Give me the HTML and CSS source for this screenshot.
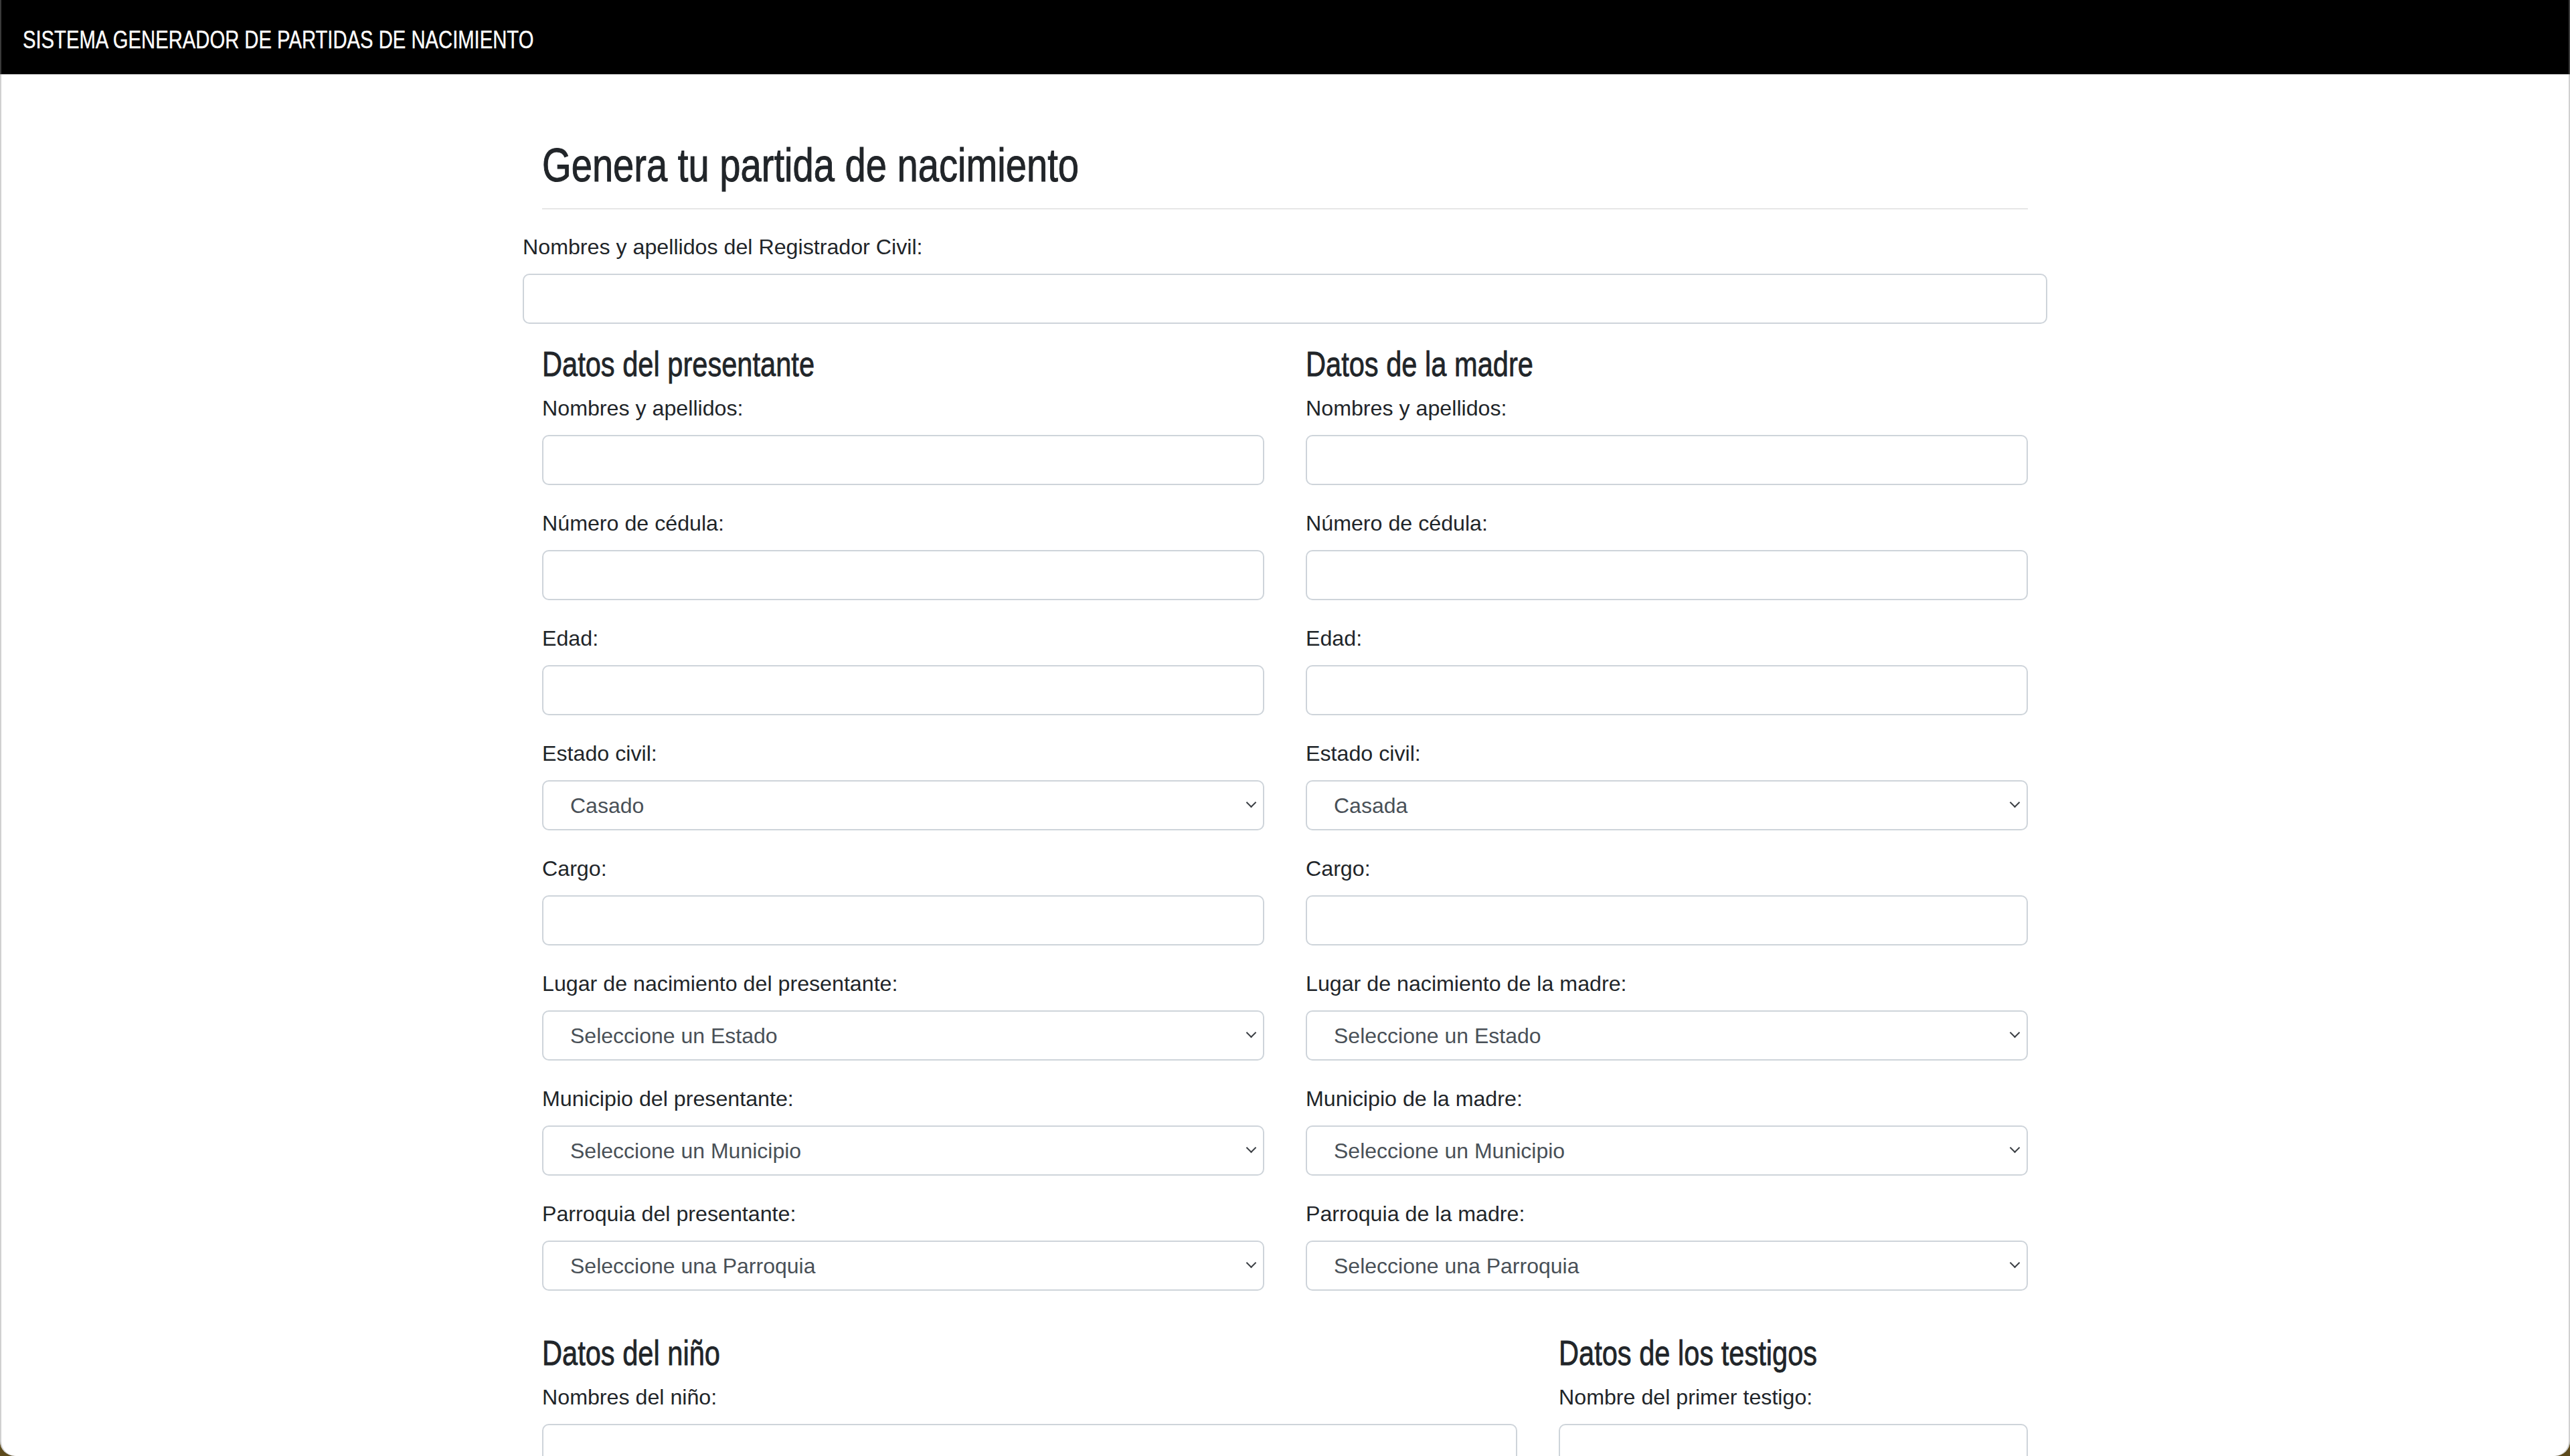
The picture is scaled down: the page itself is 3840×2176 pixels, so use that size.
FILE: index.html
```html
<!DOCTYPE html>
<html lang="es">
<head>
<meta charset="utf-8">
<title>Sistema generador de partidas de nacimiento</title>
<link rel="stylesheet" href="styles.css">
</head>
<body>
<div class="window">
  <nav class="navbar"><span class="brand">SISTEMA GENERADOR DE PARTIDAS DE NACIMIENTO</span></nav>
  <main class="container">
    <div class="title-block">
      <h1 class="page-title"><span class="narrow">Genera tu partida de nacimiento</span></h1>
      <hr class="divider">
    </div>
    <div class="field field-top">
      <label class="label">Nombres y apellidos del Registrador Civil:</label>
      <input class="control" type="text">
    </div>
    <div class="grid grid-halves">
      <section class="col">
        <h2 class="section-title"><span class="narrow">Datos del presentante</span></h2>
        <div class="field"><label class="label">Nombres y apellidos:</label><input class="control" type="text"></div>
        <div class="field"><label class="label">Número de cédula:</label><input class="control" type="text"></div>
        <div class="field"><label class="label">Edad:</label><input class="control" type="text"></div>
        <div class="field"><label class="label">Estado civil:</label><div class="select-wrap"><select class="control select"><option>Casado</option></select></div></div>
        <div class="field"><label class="label">Cargo:</label><input class="control" type="text"></div>
        <div class="field"><label class="label">Lugar de nacimiento del presentante:</label><div class="select-wrap"><select class="control select"><option>Seleccione un Estado</option></select></div></div>
        <div class="field"><label class="label">Municipio del presentante:</label><div class="select-wrap"><select class="control select"><option>Seleccione un Municipio</option></select></div></div>
        <div class="field"><label class="label">Parroquia del presentante:</label><div class="select-wrap"><select class="control select"><option>Seleccione una Parroquia</option></select></div></div>
      </section>
      <section class="col">
        <h2 class="section-title"><span class="narrow">Datos de la madre</span></h2>
        <div class="field"><label class="label">Nombres y apellidos:</label><input class="control" type="text"></div>
        <div class="field"><label class="label">Número de cédula:</label><input class="control" type="text"></div>
        <div class="field"><label class="label">Edad:</label><input class="control" type="text"></div>
        <div class="field"><label class="label">Estado civil:</label><div class="select-wrap"><select class="control select"><option>Casada</option></select></div></div>
        <div class="field"><label class="label">Cargo:</label><input class="control" type="text"></div>
        <div class="field"><label class="label">Lugar de nacimiento de la madre:</label><div class="select-wrap"><select class="control select"><option>Seleccione un Estado</option></select></div></div>
        <div class="field"><label class="label">Municipio de la madre:</label><div class="select-wrap"><select class="control select"><option>Seleccione un Municipio</option></select></div></div>
        <div class="field"><label class="label">Parroquia de la madre:</label><div class="select-wrap"><select class="control select"><option>Seleccione una Parroquia</option></select></div></div>
      </section>
    </div>
    <div class="grid grid-wide">
      <section class="col">
        <h2 class="section-title"><span class="narrow">Datos del niño</span></h2>
        <div class="field"><label class="label">Nombres del niño:</label><input class="control" type="text"></div>
      </section>
      <section class="col">
        <h2 class="section-title"><span class="narrow">Datos de los testigos</span></h2>
        <div class="field"><label class="label">Nombre del primer testigo:</label><input class="control" type="text"></div>
      </section>
    </div>
  </main>
</div>
</body>
</html>
```

FILE: styles.css
```css
html, body {
  margin: 0;
  padding: 0;
}

body {
  background: #5c4a1b;
  width: 3840px;
  height: 2176px;
  overflow: hidden;
  font-family: "Liberation Sans", Arial, sans-serif;
  color: #212529;
}

.window {
  height: 2176px;
  overflow: hidden;
  background: #ffffff;
  border-radius: 0 0 22px 22px;
  box-shadow: inset 2px 0 0 rgba(120, 120, 120, 0.35), inset -2px 0 0 rgba(120, 120, 120, 0.35);
}

.navbar {
  height: 111px;
  background: #000000;
  display: flex;
  align-items: center;
  padding: 8px 0 0 32px;
  box-sizing: border-box;
  border-left: 2px solid #3a3a3a;
  border-right: 2px solid #3a3a3a;
}

.brand {
  display: inline-block;
  font-family: "Liberation Sans", Arial, sans-serif;
  font-size: 36px;
  color: #ffffff;
  line-height: 1;
  white-space: nowrap;
  transform: scaleX(0.812);
  transform-origin: left center;
  -webkit-text-stroke: 0.4px #ffffff;
}

.narrow {
  display: inline-block;
  white-space: nowrap;
  transform-origin: left center;
}

.container {
  width: 2278px;
  margin: 0 auto;
  padding-top: 95px;
}

.title-block {
  padding: 0 29px;
}

.page-title {
  margin: 0;
  font-family: "Liberation Sans", Arial, sans-serif;
  font-weight: 400;
  font-size: 70px;
  line-height: 82px;
  color: #212529;
}

.page-title .narrow {
  transform: scaleX(0.802);
  -webkit-text-stroke: 1px #212529;
}

.divider {
  margin: 23px 0 0;
  border: 0;
  height: 2px;
  background: #e6e6e6;
}

.field {
  display: flex;
  flex-direction: column;
  margin-bottom: 33px;
}

.field-top {
  margin-top: 32px;
  margin-bottom: 30px;
}

.label {
  display: block;
  font-size: 32.2px;
  line-height: 48px;
  margin-bottom: 16px;
  color: #212529;
}

.control {
  display: block;
  box-sizing: border-box;
  width: 100%;
  height: 75px;
  margin: 0;
  border: 2px solid #ced4da;
  border-radius: 10px;
  background: #ffffff;
  font-family: "Liberation Sans", Arial, sans-serif;
  font-size: 32px;
  color: #495057;
  padding: 0 40px;
  outline: none;
}

.select {
  appearance: none;
  -webkit-appearance: none;
  padding-left: 40px;
}

.select-wrap {
  position: relative;
}

.select-wrap::after {
  content: "";
  position: absolute;
  right: 14px;
  top: 28px;
  width: 9px;
  height: 9px;
  border-right: 2.5px solid #3b3f44;
  border-bottom: 2.5px solid #3b3f44;
  transform: rotate(45deg);
  pointer-events: none;
}

.grid {
  display: grid;
  column-gap: 62px;
  padding: 0 29px;
}

.grid-halves {
  grid-template-columns: 1fr 1fr;
}

.grid-wide {
  grid-template-columns: 1fr 701px;
  margin-top: 30px;
}

.section-title {
  margin: 0 0 11px;
  font-family: "Liberation Sans", Arial, sans-serif;
  font-weight: 400;
  font-size: 52px;
  line-height: 61px;
  color: #212529;
}

.section-title .narrow {
  transform: scaleX(0.8);
  -webkit-text-stroke: 0.8px #212529;
}
```
